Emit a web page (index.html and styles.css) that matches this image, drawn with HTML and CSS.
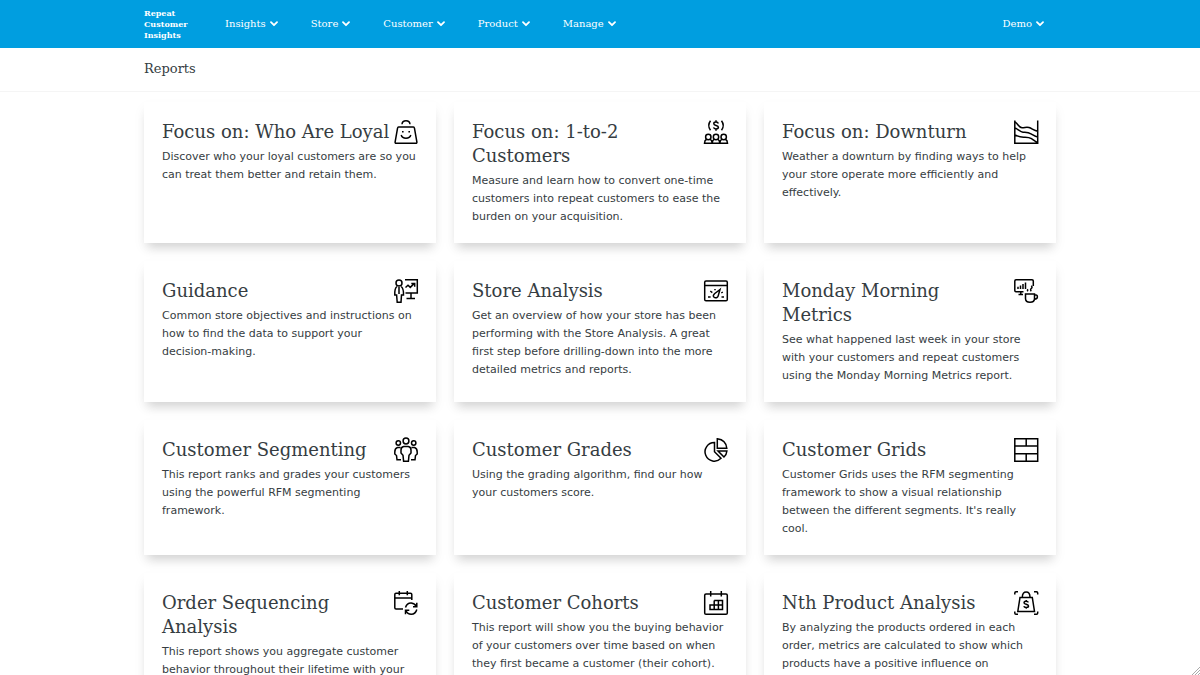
FILE: index.html
```html
<!DOCTYPE html>
<html lang="en">
<head>
<meta charset="utf-8">
<meta name="viewport" content="width=device-width, initial-scale=1">
<title>Reports - Repeat Customer Insights</title>
<link rel="stylesheet" href="styles.css">
</head>
<body>
<header class="topbar">
  <div class="container topbar-inner">
    <a class="brand" href="#">Repeat<br>Customer<br>Insights</a>
    <nav class="menu">
      <button type="button" class="menu-item">Insights<svg class="chevron" viewBox="0 0 8 6"><path d="M1 1.2 4 4.2 7 1.2"/></svg></button>
      <button type="button" class="menu-item">Store<svg class="chevron" viewBox="0 0 8 6"><path d="M1 1.2 4 4.2 7 1.2"/></svg></button>
      <button type="button" class="menu-item">Customer<svg class="chevron" viewBox="0 0 8 6"><path d="M1 1.2 4 4.2 7 1.2"/></svg></button>
      <button type="button" class="menu-item">Product<svg class="chevron" viewBox="0 0 8 6"><path d="M1 1.2 4 4.2 7 1.2"/></svg></button>
      <button type="button" class="menu-item">Manage<svg class="chevron" viewBox="0 0 8 6"><path d="M1 1.2 4 4.2 7 1.2"/></svg></button>
    </nav>
    <button type="button" class="menu-item account">Demo<svg class="chevron" viewBox="0 0 8 6"><path d="M1 1.2 4 4.2 7 1.2"/></svg></button>
  </div>
</header>
<div class="subheader">
  <div class="container"><h1 class="page-title">Reports</h1></div>
</div>
<main class="container cards">
  <article class="card">
    <div class="card-head"><h2 class="card-title">Focus on: Who Are Loyal</h2>
      <svg class="icon" viewBox="0 0 24 24"><path d="M4.6 7h14.8q.9 0 1 .9L22.900 22q.1 1.200-1 1.200H2.100q-1.100 0-1-1.200L3.600 7.900q.1-.9 1-.9zM8 4.300C8.400-.3 15.600-.3 16 4.300M7.200 15c1.300 4.300 8.300 4.300 9.600 0"/><path class="fill" d="M8 11h1.600v1.600H8zM14.400 11H16v1.600h-1.600z"/></svg></div>
    <p class="card-text">Discover who your loyal customers are so you can treat them better and retain them.</p>
  </article>
  <article class="card">
    <div class="card-head"><h2 class="card-title">Focus on: 1-to-2 Customers</h2>
      <svg class="icon" viewBox="0 0 24 24"><path d="M6.500.8Q3 5.500 6.500 10.200M17.500.8Q21 5.500 17.500 10.200M14.300 3.500C13.800 1.600 9.800 1.600 9.800 3.700S14.400 5.200 14.400 7.300 10 9.400 9.600 7.400M12 .2V2M12 9V10.800"/><circle cx="4.300" cy="17" r="2.700"/><circle cx="12" cy="17" r="2.700"/><circle cx="19.700" cy="17" r="2.700"/><path d="M2.600 19.200Q.5 20.200.5 23.200H23.500Q23.500 20.200 21.400 19.200M6 19.200Q8 20.200 8.200 23.200 8.400 20.200 10.300 19.200M13.700 19.200Q15.600 20.200 15.800 23.200 16 20.200 18 19.200"/></svg></div>
    <p class="card-text">Measure and learn how to convert one-time customers into repeat customers to ease the burden on your acquisition.</p>
  </article>
  <article class="card">
    <div class="card-head"><h2 class="card-title">Focus on: Downturn</h2>
      <svg class="icon" viewBox="0 0 24 24"><path d="M.8.5V23.200H23.700V.5M.8 1.500C4 4 5 7.700 8 7.800S12 6.500 15 7.500 20 10.500 23.700 11.200M.8 8C4 8.800 6 12 9 12.200S14 12 17 13.800 21 16.700 23.700 17M.8 15C4 16.400 7 17.300 10 17.200S15 17 17.500 18.600 21 21.500 23.700 22.500"/></svg></div>
    <p class="card-text">Weather a downturn by finding ways to help your store operate more efficiently and effectively.</p>
  </article>
  <article class="card">
    <div class="card-head"><h2 class="card-title">Guidance</h2>
      <svg class="icon" viewBox="0 0 24 24"><circle cx="5" cy="4" r="3"/><path d="M3 7.500C1 9 .6 12 .8 16H2.600L3.200 23.300H7L7.500 16H9.500C9.700 12 9 9 7.200 7.500M5 8v7M11 .8H23.300V14H11.500M17 14v5.500M12.500 19.500h8.500M11.500 8.500l2.500-2.300 2.300 2.200 4-4M17.300 4.400h3.400v3.400"/></svg></div>
    <p class="card-text">Common store objectives and instructions on how to find the data to support your <span class="keep">decision-making.</span></p>
  </article>
  <article class="card">
    <div class="card-head"><h2 class="card-title">Store Analysis</h2>
      <svg class="icon" viewBox="0 0 24 24"><path d="M2 2H22q1.300 0 1.300 1.300V20.500q0 1.300-1.300 1.300H2Q.7 21.800.7 20.500V3.300Q.7 2 2 2zM.7 6.500H23.300M16 10.500l-5.500 4.200q-2.500 2.800.2 3.900 3 .8 3.700-2.500zM6.300 12l2 1.600M4 18h2.600M17.500 18H20M11 10v1.200M17.300 14l1.500-1"/></svg></div>
    <p class="card-text">Get an overview of how your store has been performing with the Store Analysis. A great first step before drilling-down into the more detailed metrics and reports.</p>
  </article>
  <article class="card">
    <div class="card-head"><h2 class="card-title">Monday Morning Metrics</h2>
      <svg class="icon" viewBox="0 0 24 24"><path d="M9.500 12.700H2Q.8 12.700.8 11.500V2Q.8.800 2 .8H18Q19.300.8 19.300 2V7M6.800 12.800V15.500M4.500 15.500H9M4 10V7.800M6.500 10V6.500M9 10V5M11.500 10V3.500M14 12.200q-1-1 0-2M17.300 12.200q-1.400-1.500 0-2.700t0-2.700M11.500 15H20.500V19.500Q20.500 23.300 16 23.300T11.500 19.500zM20.500 16H22Q23.400 16 23.400 18T20.500 20.300"/></svg></div>
    <p class="card-text">See what happened last week in your store with your customers and repeat customers using the Monday Morning Metrics report.</p>
  </article>
  <article class="card">
    <div class="card-head"><h2 class="card-title">Customer Segmenting</h2>
      <svg class="icon" viewBox="0 0 24 24"><circle cx="12" cy="3" r="2.900"/><circle cx="4.300" cy="5" r="2.200"/><circle cx="19.700" cy="5" r="2.200"/><path d="M9.700 8.500Q7 9 7 12V15L9 17.200 9.600 23.300H14.400L15 17.200 17 15V12Q17 9 14.300 8.500zM6.500 9.500H3.500Q.8 10.300.8 14V16L2.500 17.500 3 21.800H7M17.500 9.500H20.500Q23.200 10.300 23.200 14V16L21.500 17.500 21 21.800H17"/></svg></div>
    <p class="card-text">This report ranks and grades your customers using the powerful RFM segmenting framework.</p>
  </article>
  <article class="card">
    <div class="card-head"><h2 class="card-title">Customer Grades</h2>
      <svg class="icon" viewBox="0 0 24 24"><path d="M10.500 4.500A9.300 9.300 0 1 0 17 20.300L10.500 13.800zM13.300.8V10.200H22.800Q22 2 13.300.8zM14 13H22.900Q22.500 17 20 19z"/></svg></div>
    <p class="card-text">Using the grading algorithm, find our how your customers score.</p>
  </article>
  <article class="card">
    <div class="card-head"><h2 class="card-title">Customer Grids</h2>
      <svg class="icon" viewBox="0 0 24 24"><path d="M.8.800H23.700V23.200H.8zM.8 8H23.700M.8 15.700H23.700M12.200.8V8M12.200 15.700V23.200"/></svg></div>
    <p class="card-text">Customer Grids uses the RFM segmenting framework to show a visual relationship between the different segments. It's really cool.</p>
  </article>
  <article class="card">
    <div class="card-head"><h2 class="card-title">Order Sequencing Analysis</h2>
      <svg class="icon" viewBox="0 0 24 24"><path d="M9 18H2Q.8 18 .8 16.800V3.500Q.8 2.200 2 2.200H16.500Q17.800 2.200 17.800 3.500V9M.8 7H17.800M5.300 0V4.200M13.300 0V4.200M11.500 16.500Q13 11.800 17.300 12 21 12.300 22.200 15.500M22.800 11.800V15.800H19M22.800 18.500Q21.500 23.200 17.300 23.200 13.300 23.200 12 19.500M11.500 23.300V19.300H15.300"/></svg></div>
    <p class="card-text">This report shows you aggregate customer behavior throughout their lifetime with your</p>
  </article>
  <article class="card">
    <div class="card-head"><h2 class="card-title">Customer Cohorts</h2>
      <svg class="icon" viewBox="0 0 24 24"><path d="M2 3H22Q23.300 3 23.300 4.200V22Q23.300 23.300 22 23.300H2Q.7 23.300.7 22V4.200Q.7 3 2 3zM6.700 0V5.500M17.300 0V5.500M10.200 9.500H18.500V18.500H6V14H18.500M10.200 9.500V18.500M14.400 9.500V18.500"/></svg></div>
    <p class="card-text">This report will show you the buying behavior of your customers over time based on when they first became a customer (their cohort).</p>
  </article>
  <article class="card">
    <div class="card-head"><h2 class="card-title">Nth Product Analysis</h2>
      <svg class="icon" viewBox="0 0 24 24"><path d="M.8 3.500V2Q.8.800 2 .8H4M20 .8H22.500Q23.700.8 23.700 2V3.500M.8 20.500V22Q.8 23.300 2 23.300H4M20 23.300H22.500Q23.700 23.300 23.700 22V20.500M6 6.500H18.300L20.500 20.500H3.800zM8.300 6Q8.500 1 12.200 1T16 6M14.300 11.400C13.800 9.800 10 9.800 10 11.700S14.500 13 14.500 15 10.300 16.800 9.800 15.200M12.200 9V10.500M12.200 16.300V17.800"/></svg></div>
    <p class="card-text">By analyzing the products ordered in each order, metrics are calculated to show which products have a positive influence on</p>
  </article>
</main>
<svg class="grip" viewBox="0 0 8 8"><path d="M0 8 8 0M3 8 8 3M6 8 8 6"/></svg>
</body>
</html>
```
FILE: styles.css
```css
* { box-sizing: border-box; }
body {
  margin: 0;
  background: #fff;
  color: #363d42;
  font-family: "DejaVu Sans", sans-serif;
  font-size: 11px;
  line-height: 18px;
}
.container {
  width: 76%;
  margin: 0 auto;
}
.topbar {
  background: #009ee0;
  color: #fff;
  font-family: "DejaVu Serif", serif;
}
.topbar-inner {
  display: flex;
  align-items: center;
  min-height: 48px;
}
.brand {
  width: 81px;
  color: inherit;
  font-size: 8px;
  font-weight: bold;
  line-height: 11px;
  text-decoration: none;
}
.menu {
  display: flex;
  gap: 33px;
}
.menu-item {
  display: flex;
  align-items: center;
  gap: 4px;
  padding: 0;
  border: 0;
  background: none;
  color: inherit;
  font: inherit;
  font-size: 10px;
  cursor: pointer;
}
.account {
  margin-left: auto;
  margin-right: 12px;
}
.chevron {
  width: 8px;
  height: 6px;
  fill: none;
  stroke: currentColor;
  stroke-width: 1.8;
  stroke-linecap: round;
  stroke-linejoin: round;
}
.subheader {
  padding: 9px 0 10px;
  border-bottom: 1px solid #f5f5f5;
}
.page-title {
  margin: 0;
  font-family: "DejaVu Serif", serif;
  font-size: 13px;
  font-weight: normal;
  line-height: 24px;
}
.cards {
  display: grid;
  grid-template-columns: repeat(3, minmax(0, 1fr));
  gap: 18px;
  padding: 10px 0 18px;
}
.card {
  padding: 18px 18px 17px;
  background: #fff;
  box-shadow: 0 8px 10px -4px rgba(0, 0, 0, 0.14), 0 6px 12px rgba(0, 0, 0, 0.05);
}
.card-head {
  display: flex;
  align-items: flex-start;
  justify-content: space-between;
  gap: 4px;
  margin-bottom: 4px;
}
.card-title {
  margin: 0;
  font-family: "DejaVu Serif", serif;
  font-size: 18px;
  font-weight: normal;
  line-height: 24px;
}
.card-text { margin: 0; }
.keep { white-space: nowrap; }
.icon {
  flex: none;
  width: 24px;
  height: 24px;
  overflow: visible;
  fill: none;
  stroke: #000;
  stroke-width: 1.5;
}
.icon .fill {
  fill: #000;
  stroke: none;
}
.grip {
  position: fixed;
  right: 0;
  bottom: 0;
  width: 8px;
  height: 8px;
  fill: none;
  stroke: #aaa;
}
```
